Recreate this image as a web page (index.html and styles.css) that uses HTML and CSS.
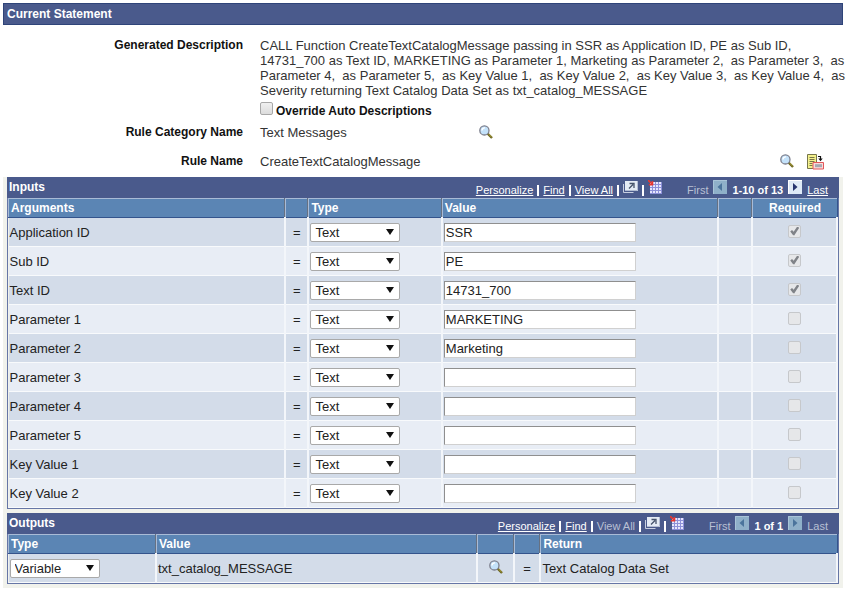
FILE: index.html
```
<!DOCTYPE html>
<html lang="en">
	<head>
		<meta charset="UTF-8">
		<title>Current Statement</title>
		<link rel="stylesheet" href="styles.css">
	</head>
	<body>
		<svg class="sprite" aria-hidden="true">
			<symbol id="lens" viewBox="0 0 14 14">
				<path d="M8.5 8.5L13 13" stroke="#6b6420" stroke-width="2.4"/>
				<path d="M9.5 9L12.6 12" stroke="#b5a93c" stroke-width="1"/>
				<circle cx="5.4" cy="5.4" r="4.6" fill="#c4e2fa" stroke="#7d7f8c" stroke-width="1.3"/>
				<path d="M3 5.5a2.6 2.6 0 0 1 3-2.6" fill="none" stroke="#fff" stroke-width="1.4"/>
			</symbol>
			<symbol id="detail" viewBox="0 0 17 16">
				<path d="M.5.5h9v14h-9z" fill="#f3f08c" stroke="#77764a"/>
				<path d="M2.5 3.5h5M2.5 5.5h5M2.5 7.5h5M2.5 9.5h3M2.5 11.5h3" stroke="#77764a"/>
				<path d="M11 2.500h2.500v3" fill="none" stroke="#111" stroke-width="1.200"/>
				<path d="M11.300 4.600h4.400L13.500 7.200z" fill="#111"/>
				<path d="M6 8.500h10.500v6.500H6z" fill="#fbd9d9" stroke="#e2575a"/>
				<path d="M8 11.700h7" stroke="#a5a9b2" stroke-width="3"/>
			</symbol>
			<symbol id="popup" viewBox="0 0 15 12">
				<path d="M.5 3v8.500h10" fill="none" stroke="#c8cfe0"/>
				<path d="M2 0h13v10H2z" fill="#e4ebf5"/>
				<path d="M2 9.500h12.500V0" fill="none" stroke="#b3bdd3"/>
				<path d="M6 7.500l4-4M6.500 2.500H11V7" fill="none" stroke="#45536b" stroke-width="1.300"/>
			</symbol>
			<symbol id="sheet" viewBox="0 0 14 14">
				<path d="M2 2h12v12H2z" fill="#e6e6fd"/>
				<path d="M4.500 2v12M7.500 2v12M10.500 2v12M13.500 2v12M2 4.500h12M2 7.500h12M2 10.500h12M2 13.500h12" stroke="#8c90d8"/>
				<path d="M0 0l4 4M4.500 1v3.800H.800" fill="none" stroke="#e8372f" stroke-width="1.600"/>
			</symbol>
			<symbol id="prev" viewBox="0 0 14 14">
				<path d="M0 0h14v14H0z" fill="#8fb0c9"/>
				<path d="M.500 14V.500H14" fill="none" stroke="#a9c4d8"/>
				<path d="M9 3v8L4.500 7z" fill="#4b749c"/>
			</symbol>
			<symbol id="next" viewBox="0 0 14 14">
				<path d="M0 0h14v14H0z" fill="#dfeaf6"/>
				<path d="M.500 14V.500H14" fill="none" stroke="#fff"/>
				<path d="M5 3v8l4.500-4z" fill="#27356f"/>
			</symbol>
			<symbol id="next-off" viewBox="0 0 14 14">
				<path d="M0 0h14v14H0z" fill="#8fb0c9"/>
				<path d="M.500 14V.500H14" fill="none" stroke="#a9c4d8"/>
				<path d="M5 3v8l4.500-4z" fill="#4b749c"/>
			</symbol>
		</svg>

		<h1 class="page-title">Current Statement</h1>

		<div class="statement">
			<div class="label">Generated Description</div>
			<div class="desc">CALL Function CreateTextCatalogMessage passing in SSR as Application ID, PE as Sub ID,<br>14731_700 as Text ID, MARKETING as Parameter 1, Marketing as Parameter 2,&nbsp; as Parameter 3,&nbsp; as<br>Parameter 4,&nbsp; as Parameter 5,&nbsp; as Key Value 1,&nbsp; as Key Value 2,&nbsp; as Key Value 3,&nbsp; as Key Value 4,&nbsp; as<br>Severity returning Text Catalog Data Set as txt_catalog_MESSAGE</div>
			<div class="override">
				<input type="checkbox" class="check" id="override">
				<label for="override">Override Auto Descriptions</label>
			</div>
			<div class="label">Rule Category Name</div>
			<div class="field category">
				<span class="text">Text Messages</span>
				<button type="button" class="icon" aria-label="Look up category"><svg width="14" height="14"><use href="#lens"/></svg></button>
			</div>
			<div class="label">Rule Name</div>
			<div class="field rule">
				<span class="text">CreateTextCatalogMessage</span>
				<button type="button" class="icon" aria-label="Look up rule"><svg width="14" height="14"><use href="#lens"/></svg></button>
				<button type="button" class="icon" aria-label="Rule details"><svg width="17" height="16"><use href="#detail"/></svg></button>
			</div>
		</div>

		<div class="grids">
			<div class="grid">
				<div class="bar">
					<h2>Inputs</h2>
					<div class="tools">
						<a href="#">Personalize</a><i></i><a href="#">Find</a><i></i><a href="#">View All</a><i></i>
						<a href="#" class="raised" aria-label="Open in new window"><svg width="15" height="12"><use href="#popup"/></svg></a><i></i>
						<a href="#" class="raised" aria-label="Download"><svg width="14" height="14"><use href="#sheet"/></svg></a>
					</div>
					<div class="pager">
						<span class="off">First</span>
						<svg class="raised" width="14" height="14"><use href="#prev"/></svg>
						<b>1-10 of 13</b>
						<a href="#" class="raised" aria-label="Next"><svg width="14" height="14"><use href="#next"/></svg></a>
						<a href="#">Last</a>
					</div>
				</div>
				<table class="inputs">
					<colgroup><col class="c-arg"><col class="c-eq"><col class="c-type"><col class="c-value"><col class="c-gap"><col class="c-req"></colgroup>
					<thead>
						<tr><th>Arguments</th><th></th><th>Type</th><th>Value</th><th></th><th class="center">Required</th></tr>
					</thead>
					<tbody>
						<tr>
							<td>Application ID</td><td class="center">=</td>
							<td><span class="select"><select aria-label="Application ID type"><option>Text</option></select></span></td>
							<td><input type="text" aria-label="Application ID value" value="SSR"></td><td></td>
							<td class="center"><input type="checkbox" class="check" aria-label="Application ID required" checked disabled></td>
						</tr>
						<tr>
							<td>Sub ID</td><td class="center">=</td>
							<td><span class="select"><select aria-label="Sub ID type"><option>Text</option></select></span></td>
							<td><input type="text" aria-label="Sub ID value" value="PE"></td><td></td>
							<td class="center"><input type="checkbox" class="check" aria-label="Sub ID required" checked disabled></td>
						</tr>
						<tr>
							<td>Text ID</td><td class="center">=</td>
							<td><span class="select"><select aria-label="Text ID type"><option>Text</option></select></span></td>
							<td><input type="text" aria-label="Text ID value" value="14731_700"></td><td></td>
							<td class="center"><input type="checkbox" class="check" aria-label="Text ID required" checked disabled></td>
						</tr>
						<tr>
							<td>Parameter 1</td><td class="center">=</td>
							<td><span class="select"><select aria-label="Parameter 1 type"><option>Text</option></select></span></td>
							<td><input type="text" aria-label="Parameter 1 value" value="MARKETING"></td><td></td>
							<td class="center"><input type="checkbox" class="check" aria-label="Parameter 1 required" disabled></td>
						</tr>
						<tr>
							<td>Parameter 2</td><td class="center">=</td>
							<td><span class="select"><select aria-label="Parameter 2 type"><option>Text</option></select></span></td>
							<td><input type="text" aria-label="Parameter 2 value" value="Marketing"></td><td></td>
							<td class="center"><input type="checkbox" class="check" aria-label="Parameter 2 required" disabled></td>
						</tr>
						<tr>
							<td>Parameter 3</td><td class="center">=</td>
							<td><span class="select"><select aria-label="Parameter 3 type"><option>Text</option></select></span></td>
							<td><input type="text" aria-label="Parameter 3 value"></td><td></td>
							<td class="center"><input type="checkbox" class="check" aria-label="Parameter 3 required" disabled></td>
						</tr>
						<tr>
							<td>Parameter 4</td><td class="center">=</td>
							<td><span class="select"><select aria-label="Parameter 4 type"><option>Text</option></select></span></td>
							<td><input type="text" aria-label="Parameter 4 value"></td><td></td>
							<td class="center"><input type="checkbox" class="check" aria-label="Parameter 4 required" disabled></td>
						</tr>
						<tr>
							<td>Parameter 5</td><td class="center">=</td>
							<td><span class="select"><select aria-label="Parameter 5 type"><option>Text</option></select></span></td>
							<td><input type="text" aria-label="Parameter 5 value"></td><td></td>
							<td class="center"><input type="checkbox" class="check" aria-label="Parameter 5 required" disabled></td>
						</tr>
						<tr>
							<td>Key Value 1</td><td class="center">=</td>
							<td><span class="select"><select aria-label="Key Value 1 type"><option>Text</option></select></span></td>
							<td><input type="text" aria-label="Key Value 1 value"></td><td></td>
							<td class="center"><input type="checkbox" class="check" aria-label="Key Value 1 required" disabled></td>
						</tr>
						<tr>
							<td>Key Value 2</td><td class="center">=</td>
							<td><span class="select"><select aria-label="Key Value 2 type"><option>Text</option></select></span></td>
							<td><input type="text" aria-label="Key Value 2 value"></td><td></td>
							<td class="center"><input type="checkbox" class="check" aria-label="Key Value 2 required" disabled></td>
						</tr>
					</tbody>
				</table>
			</div>

			<div class="grid">
				<div class="bar">
					<h2>Outputs</h2>
					<div class="tools">
						<a href="#">Personalize</a><i></i><a href="#">Find</a><i></i><span class="off">View All</span><i></i>
						<a href="#" class="raised" aria-label="Open in new window"><svg width="15" height="12"><use href="#popup"/></svg></a><i></i>
						<a href="#" class="raised" aria-label="Download"><svg width="14" height="14"><use href="#sheet"/></svg></a>
					</div>
					<div class="pager">
						<span class="off">First</span>
						<svg class="raised" width="14" height="14"><use href="#prev"/></svg>
						<b>1 of 1</b>
						<svg class="raised" width="14" height="14"><use href="#next-off"/></svg>
						<span class="off">Last</span>
					</div>
				</div>
				<table class="outputs">
					<colgroup><col class="o-type"><col class="o-value"><col class="o-look"><col class="o-eq"><col class="o-return"></colgroup>
					<thead>
						<tr><th>Type</th><th>Value</th><th></th><th></th><th>Return</th></tr>
					</thead>
					<tbody>
						<tr>
							<td><span class="select"><select aria-label="Output type"><option>Variable</option></select></span></td>
							<td>txt_catalog_MESSAGE</td>
							<td class="center"><button type="button" class="icon" aria-label="Look up variable"><svg width="14" height="14"><use href="#lens"/></svg></button></td>
							<td class="center">=</td>
							<td>Text Catalog Data Set</td>
						</tr>
					</tbody>
				</table>
			</div>
		</div>
	</body>
</html>
```
FILE: styles.css
```
*{
	box-sizing: border-box;
}
body{
	margin: 0;
	padding: 3px 3px 0;
	background: #fff;
	color: #333;
	font: 13px/15px "Liberation Sans", Arial, sans-serif;
}
.sprite{
	display: none;
}
.page-title{
	margin: 0;
	padding: 0 3px;
	border: 1px solid #2f4479;
	background: #4a5a8c;
	color: #fff;
	font-size: 12px;
	line-height: 20px;
}

/* statement fields */
.statement{
	display: grid;
	grid-template-columns: 240px 1fr;
	column-gap: 17px;
	padding: 13px 0 7px;
}
.label{
	color: #111;
	font-size: 12px;
	font-weight: bold;
	text-align: right;
}
.desc{
	white-space: nowrap;
}
.override{
	grid-column: 2;
	display: flex;
	align-items: center;
	gap: 3px;
	height: 27px;
	color: #111;
	font-size: 12px;
	font-weight: bold;
}
.override .check{
	margin-bottom: 6px;
}
.field{
	display: flex;
	align-items: flex-start;
	height: 29px;
}
.rule{
	gap: 13px;
	height: 16px;
	padding-right: 21px;
}
.category .text{
	width: 219px;
}
.rule .text{
	flex: 1;
}
.icon{
	display: inline-block;
	padding: 0;
	border: 0;
	background: none;
	cursor: pointer;
}
.icon svg{
	display: block;
}

/* grids */
.grids{
	display: flex;
	flex-direction: column;
	gap: 4px;
	padding: 0 4px 4px;
	background: #f1f2ec;
}
.grid{
	border: 1px solid #6676a6;
	border-top: 0;
}
.bar{
	display: flex;
	align-items: center;
	height: 21px;
	margin: 0 -1px;
	padding: 0 11px 0 2px;
	background: #4a5a8c;
	color: #fff;
	font-size: 11px;
}
.bar h2{
	flex: 1;
	margin: 0;
	font-size: 12px;
}
.bar a{
	color: #fff;
}
.bar svg{
	display: block;
}
.tools, .pager{
	display: flex;
	align-items: center;
	gap: 4px;
	padding-top: 6px;
}
.tools i{
	width: 2px;
	height: 11px;
	background: #fff;
}
.pager{
	gap: 5px;
	margin-left: 25px;
}
.raised{
	margin-bottom: 8px;
}
.off{
	color: #b9c0d4;
}

table{
	width: 100%;
	border-collapse: collapse;
	table-layout: fixed;
}
.c-arg{ width: 33.4%; }
.c-eq{ width: 2.8%; }
.c-type{ width: 16.1%; }
.c-value{ width: 33.3%; }
.c-gap{ width: 4.2%; }
.c-req{ width: 10.2%; }
.o-type{ width: 17.8%; }
.o-value{ width: 38.8%; }
.o-look{ width: 4.4%; }
.o-eq{ width: 3.2%; }
.o-return{ width: 35.8%; }
th{
	height: 19px;
	padding: 0 2px;
	border: 1px solid #34548c;
	border-top-color: #a9bbd6;
	border-left-color: #a9bbd6;
	background: #5b85b4;
	color: #fff;
	font-size: 12px;
	text-align: left;
}
th + th{
	border-left: 2px groove #a9bbd6;
}
td{
	height: 29px;
	padding: 0 1px;
	border-right: 2px solid #f3f6fa;
	border-bottom: 1px solid #f8fafc;
	background: #d3dce9;
	color: #222;
}
tr:nth-child(even) td{
	background: #e8edf5;
}
.center{
	text-align: center;
}
.select{
	display: block;
	position: relative;
	width: 90px;
}
.select::after{
	content: "";
	position: absolute;
	top: 6px;
	right: 6px;
	border: 4px solid transparent;
	border-top: 6px solid #111;
	border-bottom: 0;
	pointer-events: none;
}
select, input[type="text"]{
	display: block;
	height: 19px;
	margin: 0;
	border: 1px solid #a9a9a9;
	background: #fff;
	color: #222;
	font: inherit;
}
select{
	width: 100%;
	padding: 0 4px;
	border-radius: 2px;
	appearance: none;
}
input[type="text"]{
	width: 192px;
	padding: 0 1px;
	border-color: #8f8f8f #d0d0d0 #d0d0d0 #8f8f8f;
}
.check{
	display: inline-grid;
	place-items: center;
	width: 13px;
	height: 13px;
	margin: 0;
	border: 1px solid #a8a8a8;
	border-radius: 2px;
	background: linear-gradient(#f0f0f0, #dcdcdc);
	vertical-align: top;
	appearance: none;
}
.check:disabled{
	border-color: #c6c8cb;
	background: #e6e7e9;
}
.check:checked::before{
	content: "";
	width: 9px;
	height: 9px;
	background: #808388;
	clip-path: polygon(0 55%, 20% 38%, 38% 58%, 78% 0, 100% 14%, 44% 100%, 30% 95%);
}
```
